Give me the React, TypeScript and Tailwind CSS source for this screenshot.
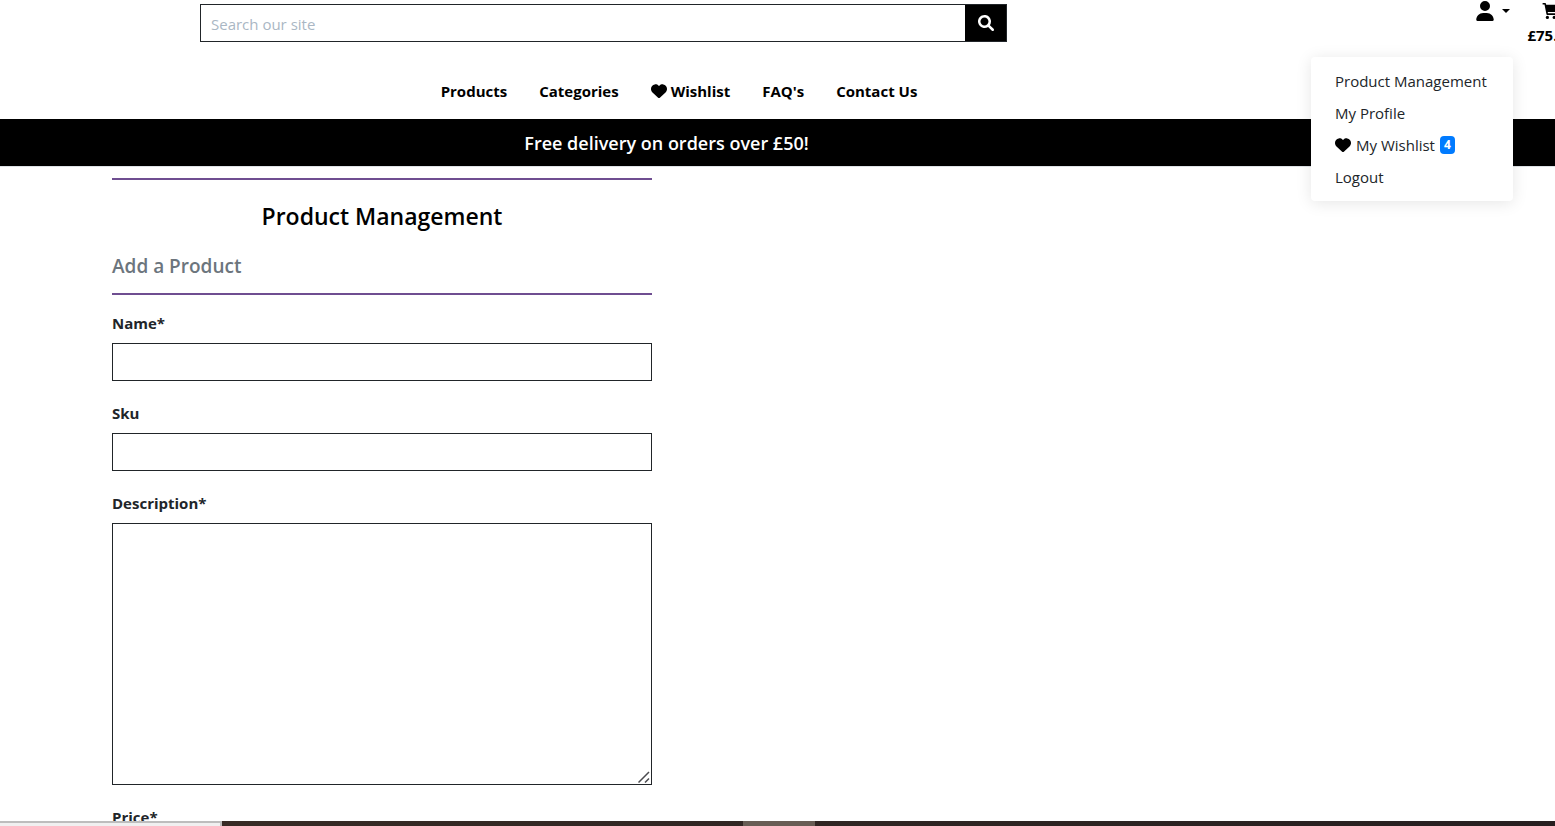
import type { ReactNode } from "react";
import { FaHeart, FaUser } from "react-icons/fa6";

function SearchIcon() {
  return (
    <svg viewBox="0 0 512 512" fill="currentColor" className="size-4" aria-hidden="true">
      <path d="M500.3 443.7l-119.7-119.7c27.22-40.41 40.65-90.9 33.46-144.7C401.8 87.79 326.8 13.32 235.2 1.723C99.01-15.51-15.51 99.01 1.724 235.2c11.6 91.64 86.08 166.7 177.6 178.9c53.8 7.189 104.3-6.236 144.7-33.46l119.7 119.7c15.62 15.62 40.95 15.62 56.57 0C515.9 484.7 515.9 459.3 500.3 443.7zM79.1 208c0-70.58 57.42-128 128-128s128 57.42 128 128c0 70.58-57.42 128-128 128S79.1 278.6 79.1 208z" />
    </svg>
  );
}

function CartIcon() {
  return (
    <svg viewBox="0 0 18 18" fill="currentColor" className="size-[18px]" aria-hidden="true">
      <path d="M0.6 1H3.2Q3.8 1 3.95 1.7L4.2 2.8H16.2L14.6 9.4Q14.4 10.1 13.7 10.1H5.7L5.95 11.3H14.2V12.9H5.2Q4.6 12.9 4.45 12.2L2.5 2.6H0.6Z" />
      <circle cx="5.4" cy="15.4" r="1.6" />
      <circle cx="12.2" cy="15.4" r="1.6" />
    </svg>
  );
}

function ResizeGrip() {
  return (
    <svg
      viewBox="0 0 12 12"
      stroke="#4b4b4f"
      strokeWidth="1.5"
      className="pointer-events-none absolute right-[2px] bottom-[2px] size-3"
      aria-hidden="true"
    >
      <path d="M0.5 11.5 11 1M7 11.5 11 7.5" />
    </svg>
  );
}

function NavLink({ children }: { children: ReactNode }) {
  return (
    <a href="#" className="flex items-center gap-1 font-bold text-black">
      {children}
    </a>
  );
}

function MenuItem({ children }: { children: ReactNode }) {
  return (
    <a href="#" className="flex h-8 items-center gap-[5px] px-6 whitespace-nowrap">
      {children}
    </a>
  );
}

function AccountMenu() {
  return (
    <nav
      aria-label="Account"
      className="absolute top-[57px] right-[42px] z-10 w-[202px] rounded bg-white py-2 text-[#212529] shadow-[0_2px_16px_rgba(0,0,0,0.1)]"
    >
      <MenuItem>Product Management</MenuItem>
      <MenuItem>My Profile</MenuItem>
      <MenuItem>
        <FaHeart className="size-4 text-black" />
        My Wishlist
        <span className="rounded bg-[#007bff] px-1 text-xs leading-[18px] font-bold text-white">4</span>
      </MenuItem>
      <MenuItem>Logout</MenuItem>
    </nav>
  );
}

function Header() {
  return (
    <header className="relative shrink-0">
      <div className="flex h-[73px] items-start overflow-hidden pl-[200px]">
        <form className="mt-1 flex h-[38px] flex-1 border border-[#212529]">
          <input
            type="text"
            aria-label="Search our site"
            placeholder="Search our site"
            className="min-w-0 flex-1 px-[10px] pt-[2px] outline-none placeholder:text-[#aab7c4]"
          />
          <button type="button" aria-label="Search" className="flex w-[41px] items-center justify-center bg-black text-white">
            <SearchIcon />
          </button>
        </form>
        <button type="button" aria-label="My account" className="mr-4 ml-[469px] flex h-[22px] items-center gap-2">
          <FaUser className="h-5 w-[18px] text-black" />
          <span className="border-x-4 border-t-4 border-x-transparent border-t-black" />
        </button>
        <a href="#" className="-mr-[21px] flex w-[50px] shrink-0 flex-col items-center pt-[2px] font-bold text-black">
          <CartIcon />
          <span className="leading-[30px]">£75.00</span>
        </a>
      </div>
      <nav aria-label="Main" className="mr-[197px] flex h-[46px] items-start justify-center gap-8 pt-[6px]">
        <NavLink>Products</NavLink>
        <NavLink>Categories</NavLink>
        <NavLink>
          <FaHeart className="size-4" />
          Wishlist
        </NavLink>
        <NavLink>FAQ's</NavLink>
        <NavLink>Contact Us</NavLink>
      </nav>
      <div className="flex h-12 items-center justify-center border-b border-[#dee2e6] bg-black pr-[222px]">
        <h2 className="text-lg font-semibold text-white">Free delivery on orders over £50!</h2>
      </div>
      <AccountMenu />
    </header>
  );
}

const control = "block w-full border border-[#212529] bg-white px-3 outline-none";

function Field({ id, label, children }: { id: string; label: string; children: ReactNode }) {
  return (
    <div className="mb-5">
      <label htmlFor={id} className="mb-2 block font-bold">
        {label}
      </label>
      {children}
    </div>
  );
}

function ProductForm() {
  return (
    <main className="min-h-0 flex-1 overflow-hidden pt-[11px] pl-28">
      <div className="w-full max-w-[540px]">
        <hr className="border-t-2 border-[#6f4e91]" />
        <h1 className="mt-5 text-center text-[23px] leading-8 font-semibold text-black">Product Management</h1>
        <h2 className="mt-5 text-[19px] leading-7 font-semibold text-[#6c757d]">Add a Product</h2>
        <hr className="mt-[13px] mb-4 border-t-2 border-[#6f4e91]" />
        <form>
          <Field id="name" label="Name*">
            <input id="name" type="text" className={`${control} h-[38px]`} />
          </Field>
          <Field id="sku" label="Sku">
            <input id="sku" type="text" className={`${control} h-[38px]`} />
          </Field>
          <Field id="description" label="Description*">
            <div className="relative">
              <textarea id="description" className={`${control} h-[262px] resize-y [&::-webkit-resizer]:hidden`} />
              <ResizeGrip />
            </div>
          </Field>
          <Field id="price" label="Price*">
            <input id="price" type="number" className={`${control} h-[38px]`} />
          </Field>
        </form>
      </div>
    </main>
  );
}

export default function App() {
  return (
    <div className="flex h-screen flex-col overflow-hidden bg-white font-['Open_Sans','Noto_Sans',sans-serif] text-[15px] leading-6 text-[#212529]">
      <Header />
      <ProductForm />
      <footer className="flex h-[5px] shrink-0 bg-linear-to-r from-[#3a2d26] to-[#271f20]">
        <div className="w-[222px] border-t-2 border-r-2 border-[#bdbdbd] bg-[#f0f0f0]" />
        <div className="ml-[521px] w-[72px] bg-[#685d55]" />
      </footer>
    </div>
  );
}
